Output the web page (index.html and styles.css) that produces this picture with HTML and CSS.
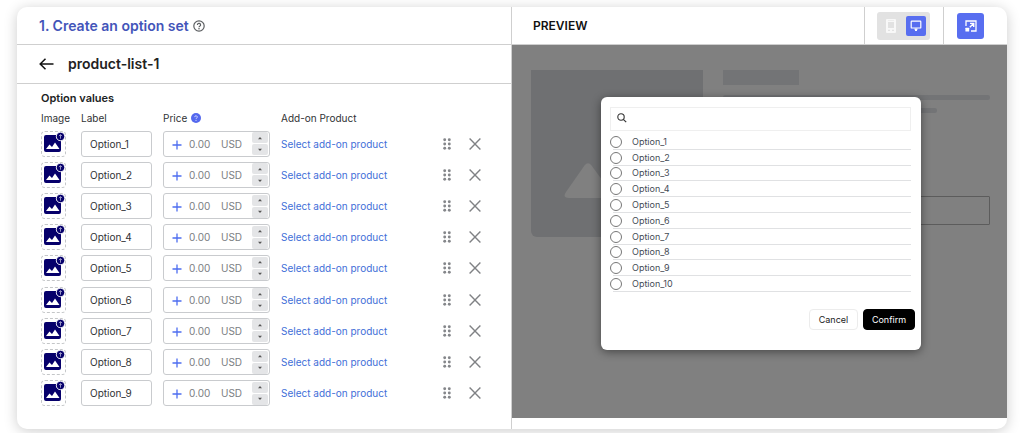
FILE: index.html
```html
<!DOCTYPE html>
<html lang="en">
<head>
<meta charset="utf-8">
<title>Create an option set</title>
<link rel="stylesheet" href="styles.css">
</head>
<body>
<svg class="sprite" aria-hidden="true">
  <symbol id="i-image" viewBox="0 0 26 26">
    <path fill="#06006b" d="M5 4h10a5 5 0 0 0 5 6v9a2 2 0 0 1-2 2H5a2 2 0 0 1-2-2V6a2 2 0 0 1 2-2z"/>
    <path fill="#fff" d="M5 18l3.500-4.500 2.500 2.500 3-4.500 4.500 6.500z"/>
    <circle cx="19.500" cy="5.500" r="4.200" fill="#06006b" stroke="#fff" stroke-width=".8"/>
    <path d="M19.500 7.700V3.700M18 5.100l1.500-1.500L21 5.100" fill="none" stroke="#a9a6d0" stroke-width=".9"/>
  </symbol>
  <symbol id="i-plus" viewBox="0 0 10 10"><path d="M5 .5v9M.5 5h9" fill="none" stroke="#4d6df0" stroke-width="1.300"/></symbol>
  <symbol id="i-up" viewBox="0 0 6 4"><path d="M1 3.200L3 1l2 2.200z" fill="#555"/></symbol>
  <symbol id="i-down" viewBox="0 0 6 4"><path d="M1 .8L3 3 5 .8z" fill="#555"/></symbol>
  <symbol id="i-drag" viewBox="0 0 8 12">
    <g fill="#84868a"><circle cx="1.700" cy="1.700" r="1.450"/><circle cx="6.300" cy="1.700" r="1.450"/><circle cx="1.700" cy="6" r="1.450"/><circle cx="6.300" cy="6" r="1.450"/><circle cx="1.700" cy="10.300" r="1.450"/><circle cx="6.300" cy="10.300" r="1.450"/></g>
  </symbol>
  <symbol id="i-close" viewBox="0 0 12 12"><path d="M.6.600l10.800 10.800M11.400.600L.6 11.400" fill="none" stroke="#808285" stroke-width="1.400"/></symbol>
</svg>

<main class="card">
  <section class="editor">
    <header class="bar editor-title">
      <h1>1. Create an option set</h1>
      <svg class="help" viewBox="0 0 12 12" aria-hidden="true"><circle cx="6" cy="6" r="5.200" fill="none" stroke="#5c5f62" stroke-width="1.200"/><path d="M4.400 4.900a1.600 1.500 0 1 1 2.300 1.300c-.5.300-.7.500-.7 1" fill="none" stroke="#5c5f62" stroke-width="1.200"/><circle cx="6" cy="8.700" r=".8" fill="#5c5f62"/></svg>
    </header>
    <div class="bar product">
      <button class="back" aria-label="Back"><svg viewBox="0 0 15 12"><path d="M6.500.800L1.200 6l5.300 5.200M1.200 6h13.300" fill="none" stroke="#111" stroke-width="1.500"/></svg></button>
      <h2>product-list-1</h2>
    </div>
    <div class="values">
      <h3>Option values</h3>
      <table class="options">
        <thead>
          <tr><th>Image</th><th>Label</th><th><span class="price-head">Price <svg viewBox="0 0 10 10" aria-hidden="true"><circle cx="5" cy="5" r="5" fill="#5468ee"/><path d="M3.700 4.100a1.300 1.200 0 1 1 1.900 1c-.4.200-.6.400-.6.800" fill="none" stroke="#dde2ff" stroke-width=".9"/><circle cx="5" cy="7.300" r=".6" fill="#dde2ff"/></svg></span></th><th>Add-on Product</th></tr>
        </thead>
        <tbody>
          <tr><td><button class="upload" aria-label="Upload image"><svg><use href="#i-image"/></svg></button></td><td><input class="label-input" aria-label="Label" value="Option_1"></td><td><div class="price"><svg class="plus"><use href="#i-plus"/></svg><input aria-label="Price" placeholder="0.00"><span>USD</span><div class="stepper"><button aria-label="Increase"><svg><use href="#i-up"/></svg></button><button aria-label="Decrease"><svg><use href="#i-down"/></svg></button></div></div></td><td><a href="#">Select add-on product</a></td><td><button class="drag" aria-label="Reorder"><svg><use href="#i-drag"/></svg></button></td><td><button class="remove" aria-label="Remove"><svg><use href="#i-close"/></svg></button></td></tr>
          <tr><td><button class="upload" aria-label="Upload image"><svg><use href="#i-image"/></svg></button></td><td><input class="label-input" aria-label="Label" value="Option_2"></td><td><div class="price"><svg class="plus"><use href="#i-plus"/></svg><input aria-label="Price" placeholder="0.00"><span>USD</span><div class="stepper"><button aria-label="Increase"><svg><use href="#i-up"/></svg></button><button aria-label="Decrease"><svg><use href="#i-down"/></svg></button></div></div></td><td><a href="#">Select add-on product</a></td><td><button class="drag" aria-label="Reorder"><svg><use href="#i-drag"/></svg></button></td><td><button class="remove" aria-label="Remove"><svg><use href="#i-close"/></svg></button></td></tr>
          <tr><td><button class="upload" aria-label="Upload image"><svg><use href="#i-image"/></svg></button></td><td><input class="label-input" aria-label="Label" value="Option_3"></td><td><div class="price"><svg class="plus"><use href="#i-plus"/></svg><input aria-label="Price" placeholder="0.00"><span>USD</span><div class="stepper"><button aria-label="Increase"><svg><use href="#i-up"/></svg></button><button aria-label="Decrease"><svg><use href="#i-down"/></svg></button></div></div></td><td><a href="#">Select add-on product</a></td><td><button class="drag" aria-label="Reorder"><svg><use href="#i-drag"/></svg></button></td><td><button class="remove" aria-label="Remove"><svg><use href="#i-close"/></svg></button></td></tr>
          <tr><td><button class="upload" aria-label="Upload image"><svg><use href="#i-image"/></svg></button></td><td><input class="label-input" aria-label="Label" value="Option_4"></td><td><div class="price"><svg class="plus"><use href="#i-plus"/></svg><input aria-label="Price" placeholder="0.00"><span>USD</span><div class="stepper"><button aria-label="Increase"><svg><use href="#i-up"/></svg></button><button aria-label="Decrease"><svg><use href="#i-down"/></svg></button></div></div></td><td><a href="#">Select add-on product</a></td><td><button class="drag" aria-label="Reorder"><svg><use href="#i-drag"/></svg></button></td><td><button class="remove" aria-label="Remove"><svg><use href="#i-close"/></svg></button></td></tr>
          <tr><td><button class="upload" aria-label="Upload image"><svg><use href="#i-image"/></svg></button></td><td><input class="label-input" aria-label="Label" value="Option_5"></td><td><div class="price"><svg class="plus"><use href="#i-plus"/></svg><input aria-label="Price" placeholder="0.00"><span>USD</span><div class="stepper"><button aria-label="Increase"><svg><use href="#i-up"/></svg></button><button aria-label="Decrease"><svg><use href="#i-down"/></svg></button></div></div></td><td><a href="#">Select add-on product</a></td><td><button class="drag" aria-label="Reorder"><svg><use href="#i-drag"/></svg></button></td><td><button class="remove" aria-label="Remove"><svg><use href="#i-close"/></svg></button></td></tr>
          <tr><td><button class="upload" aria-label="Upload image"><svg><use href="#i-image"/></svg></button></td><td><input class="label-input" aria-label="Label" value="Option_6"></td><td><div class="price"><svg class="plus"><use href="#i-plus"/></svg><input aria-label="Price" placeholder="0.00"><span>USD</span><div class="stepper"><button aria-label="Increase"><svg><use href="#i-up"/></svg></button><button aria-label="Decrease"><svg><use href="#i-down"/></svg></button></div></div></td><td><a href="#">Select add-on product</a></td><td><button class="drag" aria-label="Reorder"><svg><use href="#i-drag"/></svg></button></td><td><button class="remove" aria-label="Remove"><svg><use href="#i-close"/></svg></button></td></tr>
          <tr><td><button class="upload" aria-label="Upload image"><svg><use href="#i-image"/></svg></button></td><td><input class="label-input" aria-label="Label" value="Option_7"></td><td><div class="price"><svg class="plus"><use href="#i-plus"/></svg><input aria-label="Price" placeholder="0.00"><span>USD</span><div class="stepper"><button aria-label="Increase"><svg><use href="#i-up"/></svg></button><button aria-label="Decrease"><svg><use href="#i-down"/></svg></button></div></div></td><td><a href="#">Select add-on product</a></td><td><button class="drag" aria-label="Reorder"><svg><use href="#i-drag"/></svg></button></td><td><button class="remove" aria-label="Remove"><svg><use href="#i-close"/></svg></button></td></tr>
          <tr><td><button class="upload" aria-label="Upload image"><svg><use href="#i-image"/></svg></button></td><td><input class="label-input" aria-label="Label" value="Option_8"></td><td><div class="price"><svg class="plus"><use href="#i-plus"/></svg><input aria-label="Price" placeholder="0.00"><span>USD</span><div class="stepper"><button aria-label="Increase"><svg><use href="#i-up"/></svg></button><button aria-label="Decrease"><svg><use href="#i-down"/></svg></button></div></div></td><td><a href="#">Select add-on product</a></td><td><button class="drag" aria-label="Reorder"><svg><use href="#i-drag"/></svg></button></td><td><button class="remove" aria-label="Remove"><svg><use href="#i-close"/></svg></button></td></tr>
          <tr><td><button class="upload" aria-label="Upload image"><svg><use href="#i-image"/></svg></button></td><td><input class="label-input" aria-label="Label" value="Option_9"></td><td><div class="price"><svg class="plus"><use href="#i-plus"/></svg><input aria-label="Price" placeholder="0.00"><span>USD</span><div class="stepper"><button aria-label="Increase"><svg><use href="#i-up"/></svg></button><button aria-label="Decrease"><svg><use href="#i-down"/></svg></button></div></div></td><td><a href="#">Select add-on product</a></td><td><button class="drag" aria-label="Reorder"><svg><use href="#i-drag"/></svg></button></td><td><button class="remove" aria-label="Remove"><svg><use href="#i-close"/></svg></button></td></tr>
        </tbody>
      </table>
    </div>
  </section>

  <section class="preview">
    <header class="bar preview-bar">
      <h2>PREVIEW</h2>
      <div class="tool">
        <div class="devices">
          <button aria-label="Mobile"><svg class="phone" viewBox="0 0 10 14"><path fill="#f8f8f8" fill-rule="evenodd" d="M1 0h8a1 1 0 0 1 1 1v12a1 1 0 0 1-1 1H1a1 1 0 0 1-1-1V1a1 1 0 0 1 1-1zM2 3v6h6v-6zM2 1.300v.5h6v-.5zM2 10.800v1.200h2v-1.200zM6 10.800v1.200h2v-1.200z"/></svg></button>
          <button class="active" aria-label="Desktop"><svg class="desktop" viewBox="0 0 12 12"><rect x="1.200" y="1.200" width="9.600" height="6.800" rx=".6" fill="none" stroke="#fff" stroke-width="1.200"/><path d="M4.500 8.500h3v1.200H7v1.300H5V9.700h-.5z" fill="#fff"/></svg></button>
        </div>
      </div>
      <div class="tool last">
        <button class="expand" aria-label="Expand"><svg viewBox="0 0 12 12"><path d="M1 6V1h10v10H6" fill="none" stroke="#fff" stroke-width="1.300"/><rect x=".4" y="7.800" width="3.800" height="3.800" rx=".5" fill="#fff"/><path d="M5 3.400h3.700v3.700M8.500 3.600L4.800 7.300" fill="none" stroke="#fff" stroke-width="1.400"/></svg></button>
      </div>
    </header>
    <div class="stage">
      <div class="skeleton">
        <div class="picture"><svg viewBox="0 0 96 38"><path d="M20.500 3.500Q24-1 27.500 3.500L47 30Q50 36 43 36H5Q-2 36 2 30z" fill="#808080"/><path d="M58 8Q62 3 66 8L90 30Q94 36 88 36H38z" fill="#808080"/></svg></div>
        <div class="lines"><i class="block"></i><i class="line"></i><i class="line short"></i><i class="outline"></i></div>
      </div>
      <form class="modal" role="dialog" aria-label="Choose an option">
        <div class="search"><svg viewBox="0 0 10 10" aria-hidden="true"><circle cx="4" cy="4" r="3.200" fill="none" stroke="#333" stroke-width="1.100"/><path d="M6.300 6.300l2.900 2.900" stroke="#333" stroke-width="1.200"/></svg><input type="search" aria-label="Search"></div>
        <div class="choices">
          <label><input type="radio" name="option"><span>Option_1</span></label>
          <label><input type="radio" name="option"><span>Option_2</span></label>
          <label><input type="radio" name="option"><span>Option_3</span></label>
          <label><input type="radio" name="option"><span>Option_4</span></label>
          <label><input type="radio" name="option"><span>Option_5</span></label>
          <label><input type="radio" name="option"><span>Option_6</span></label>
          <label><input type="radio" name="option"><span>Option_7</span></label>
          <label><input type="radio" name="option"><span>Option_8</span></label>
          <label><input type="radio" name="option"><span>Option_9</span></label>
          <label><input type="radio" name="option"><span>Option_10</span></label>
        </div>
        <div class="actions"><button type="button">Cancel</button><button type="button" class="confirm">Confirm</button></div>
      </form>
    </div>
  </section>
</main>
</body>
</html>
```
FILE: styles.css
```css
* { box-sizing: border-box; }
body {
  margin: 0;
  padding: 7px 17px 4px;
  min-height: 100vh;
  display: flex;
  background: #fff;
  color: #303235;
  font: 10px/14px Inter, "Liberation Sans", sans-serif;
}
h1, h2, h3 { margin: 0; font-weight: 600; }
button { padding: 0; border: 0; background: none; font: inherit; color: inherit; display: flex; align-items: center; justify-content: center; }
input { font: inherit; color: inherit; margin: 0; min-width: 0; }
svg { display: block; flex: none; }
.sprite { position: absolute; width: 0; height: 0; }

.card {
  flex: 1;
  display: grid;
  grid-template-columns: 1fr 1fr;
  border-radius: 10px;
  background: #fff;
  box-shadow: 0 2px 14px rgba(0, 0, 0, .2);
}
.bar { display: flex; align-items: center; border-bottom: 1px solid #cfcfcf; }

.editor { display: flex; flex-direction: column; border-right: 1px solid #cfcfcf; }
.editor-title { height: 38px; padding-left: 22px; gap: 4px; }
.editor-title h1 { font-size: 14px; line-height: 18px; color: #4355b9; }
.help { width: 12px; height: 12px; }
.product { height: 39px; padding-left: 22px; gap: 14px; }
.product h2 { font-size: 14px; line-height: 20px; color: #222; }
.back svg { width: 15px; height: 12px; }

.values { flex: 1; display: flex; flex-direction: column; padding: 6px 30px 20px 24px; }
.values h3 { font-size: 11px; line-height: 16px; color: #202223; }
.options { flex: 1; display: flex; flex-direction: column; }
.options thead { display: block; padding: 4px 0 2px; }
.options tbody { flex: 1; display: grid; grid-auto-rows: 1fr; }
.options tr { display: grid; grid-template-columns: 40px 82px 118px 1fr 26px 12px; align-items: center; }
.options th, .options td { display: block; padding: 0; text-align: left; font-weight: 400; }
.options th { line-height: 16px; white-space: nowrap; }
.price-head { display: flex; align-items: center; gap: 4px; }
.price-head svg { width: 10px; height: 10px; }
.options a { color: #3f6fd8; text-decoration: none; }

.upload { width: 25px; height: 26px; border: 1px dashed #c4c6c8; border-radius: 4px; }
.upload svg { width: 26px; height: 26px; }
.label-input { display: block; width: 71px; height: 26px; padding: 0 8px; border: 1px solid #c9cbce; border-radius: 3px; }
.price { display: flex; align-items: center; width: 107px; height: 26px; padding: 0 1px 0 8px; border: 1px solid #c9cbce; border-radius: 3px; color: #7b7e82; }
.price input { width: 32px; margin-left: 7px; padding: 0; border: 0; background: none; }
.price input::placeholder { color: #7b7e82; opacity: 1; }
.plus { width: 10px; height: 10px; margin-top: 2px; }
.stepper { display: grid; gap: 1px; margin-left: auto; }
.stepper button { width: 16px; height: 11px; border-radius: 2px; background: #e4e5e7; }
.stepper svg { width: 6px; height: 4px; }
.drag svg { width: 8px; height: 12px; }
.remove svg { width: 12px; height: 12px; }

.preview { display: flex; flex-direction: column; padding-bottom: 11px; }
.preview-bar { height: 38px; padding-left: 21px; }
.preview-bar h2 { flex: 1; font-size: 12px; line-height: 16px; color: #111; }
.tool { align-self: stretch; display: flex; align-items: center; padding: 0 13px 0 12px; border-left: 1px solid #cfcfcf; }
.last { padding-right: 23px; padding-left: 13px; }
.devices { display: flex; gap: 5px; padding: 4px; border-radius: 3px; background: #e2e2e2; }
.devices button { width: 20px; height: 20px; border-radius: 2px; }
.devices .active, .expand { background: #586ef0; }
.phone { width: 10px; height: 14px; }
.desktop { width: 12px; height: 12px; }
.expand { width: 27px; height: 26px; border-radius: 3px; }
.expand svg { width: 12px; height: 12px; }

.stage { position: relative; flex: 1; padding: 25px 17px 0 19px; background: #808080; }
.skeleton { display: grid; grid-template-columns: 172px 1fr; gap: 20px; }
.picture { height: 167px; padding: 92px 0 0 33px; border-radius: 0 0 6px 6px; background: #6f7072; overflow: hidden; }
.picture svg { width: 96px; height: 38px; }
.lines { display: flex; flex-direction: column; align-items: flex-start; }
.block { width: 76px; height: 15px; background: #737476; }
.line { width: 100%; height: 5px; margin-top: 10px; border-radius: 2px; background: #737476; }
.short { width: 80%; margin-top: 8px; }
.outline { width: 100%; height: 29px; margin-top: 83px; border: 1px solid #5c5c5c; border-radius: 1px; }

.modal {
  position: absolute;
  inset: 52px 86px 68px 89px;
  display: flex;
  flex-direction: column;
  padding: 10px 10px 20px 9px;
  border-radius: 6px;
  background: #fff;
  box-shadow: 0 2px 10px rgba(0, 0, 0, .45);
}
.search { display: flex; align-items: center; gap: 6px; height: 24px; padding: 0 6px 2px; border: 1px solid #efefef; }
.search svg { width: 10px; height: 10px; }
.search input { flex: 1; border: 0; padding: 0; background: none; outline: 0; }
.choices { flex: 1; display: grid; grid-auto-rows: 1fr; margin-top: 3px; font-size: 9px; line-height: 12px; color: #444b55; }
.choices label { display: flex; align-items: center; gap: 10px; background: linear-gradient(#e0e1e3, #e0e1e3) 3px 100% / 100% 1px no-repeat; }
.choices input { appearance: none; width: 12px; height: 12px; border: 1px solid #777; border-radius: 50%; background: #fff; }
.actions { display: flex; justify-content: flex-end; gap: 5px; margin: 17px -4px 0 0; font-size: 9px; }
.actions button { width: 49px; height: 21px; border: 1px solid #ececec; border-radius: 4px; color: #222; }
.actions .confirm { width: 52px; border-color: #000; background: #000; color: #fff; }
```
